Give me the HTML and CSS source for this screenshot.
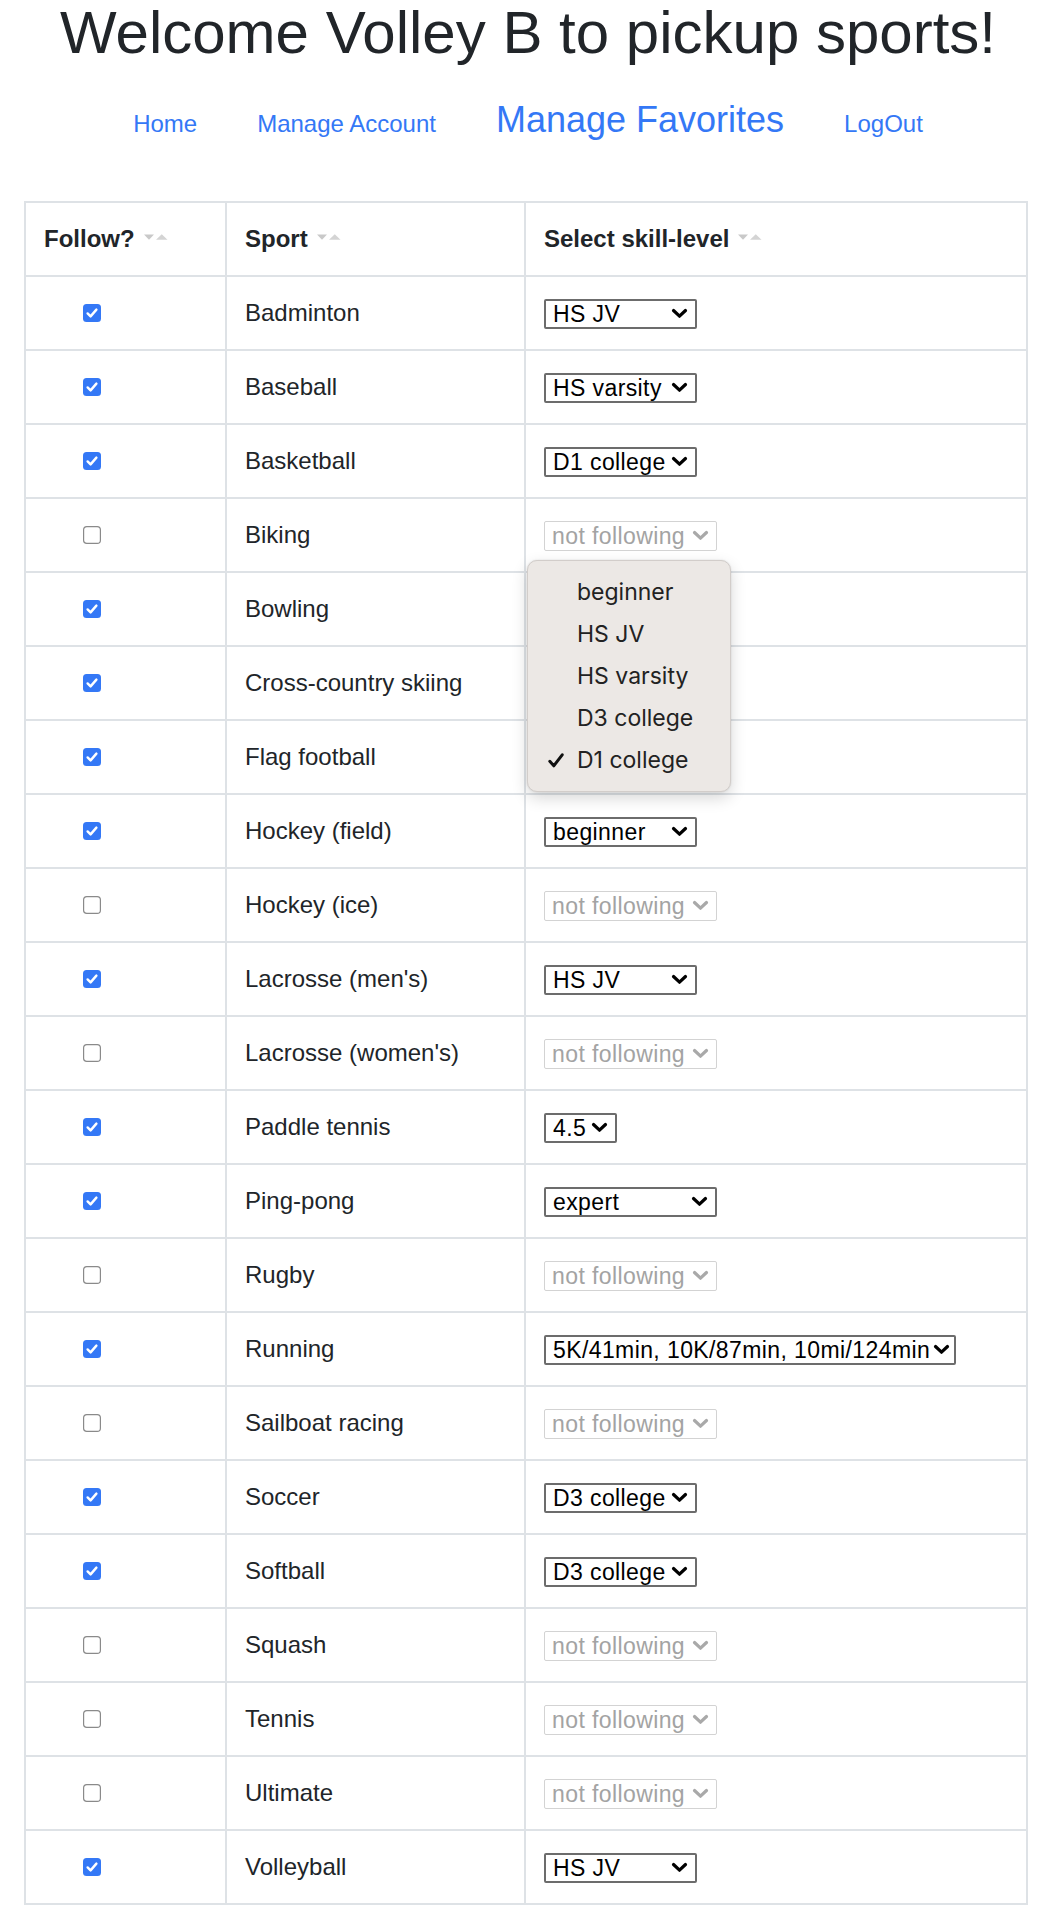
FILE: index.html
```html
<!DOCTYPE html>
<html lang="en">
<head>
<meta charset="utf-8">
<title>Manage Favorites</title>
<link rel="stylesheet" href="styles.css">
</head>
<body>
<div class="page">
  <h1 class="title">Welcome Volley B to pickup sports!</h1>
  <nav class="nav">
    <a class="nav-link" href="#">Home</a>
    <a class="nav-link" href="#">Manage Account</a>
    <a class="nav-link active" href="#">Manage Favorites</a>
    <a class="nav-link" href="#">LogOut</a>
  </nav>

  <div class="table-wrap">
    <table class="fav">
      <colgroup><col class="col-follow"><col class="col-sport"><col class="col-level"></colgroup>
      <thead>
        <tr>
          <th>Follow?<svg class="sort" viewBox="0 0 24 6" width="24" height="6"><path d="M0 0.5H10L5 5.8Z" fill="#c9c9c9"/><path d="M12 5.8H23.5L17.75 0.3Z" fill="#d4d4d4"/></svg></th>
          <th>Sport<svg class="sort" viewBox="0 0 24 6" width="24" height="6"><path d="M0 0.5H10L5 5.8Z" fill="#c9c9c9"/><path d="M12 5.8H23.5L17.75 0.3Z" fill="#d4d4d4"/></svg></th>
          <th>Select skill-level<svg class="sort" viewBox="0 0 24 6" width="24" height="6"><path d="M0 0.5H10L5 5.8Z" fill="#c9c9c9"/><path d="M12 5.8H23.5L17.75 0.3Z" fill="#d4d4d4"/></svg></th>
        </tr>
      </thead>
      <tbody>
        <tr><td><svg class="cb" viewBox="0 0 18 18"><rect x="0" y="0" width="18" height="18" rx="3.5" fill="#3478f6"/><path d="M4.6 9.4L7.6 12.4L13.4 5.6" fill="none" stroke="#fff" stroke-width="2.4" stroke-linecap="round" stroke-linejoin="round"/></svg></td><td>Badminton</td><td><span class="sel w152"><span class="sel-text">HS JV</span><svg class="chev" viewBox="0 0 17 11"><path d="M2.5 2.5L8.5 8.2L14.5 2.5" fill="none" stroke="#000" stroke-width="3.2" stroke-linecap="round" stroke-linejoin="round"/></svg></span></td></tr>
        <tr><td><svg class="cb" viewBox="0 0 18 18"><rect x="0" y="0" width="18" height="18" rx="3.5" fill="#3478f6"/><path d="M4.6 9.4L7.6 12.4L13.4 5.6" fill="none" stroke="#fff" stroke-width="2.4" stroke-linecap="round" stroke-linejoin="round"/></svg></td><td>Baseball</td><td><span class="sel w152"><span class="sel-text">HS varsity</span><svg class="chev" viewBox="0 0 17 11"><path d="M2.5 2.5L8.5 8.2L14.5 2.5" fill="none" stroke="#000" stroke-width="3.2" stroke-linecap="round" stroke-linejoin="round"/></svg></span></td></tr>
        <tr><td><svg class="cb" viewBox="0 0 18 18"><rect x="0" y="0" width="18" height="18" rx="3.5" fill="#3478f6"/><path d="M4.6 9.4L7.6 12.4L13.4 5.6" fill="none" stroke="#fff" stroke-width="2.4" stroke-linecap="round" stroke-linejoin="round"/></svg></td><td>Basketball</td><td><span class="sel w152"><span class="sel-text">D1 college</span><svg class="chev" viewBox="0 0 17 11"><path d="M2.5 2.5L8.5 8.2L14.5 2.5" fill="none" stroke="#000" stroke-width="3.2" stroke-linecap="round" stroke-linejoin="round"/></svg></span></td></tr>
        <tr><td><svg class="cb" viewBox="0 0 18 18"><rect x="0.6" y="0.6" width="16.8" height="16.8" rx="3.2" fill="#fff" stroke="#8a8a8a" stroke-width="1.2"/></svg></td><td>Biking</td><td><span class="sel dis w173"><span class="sel-text">not following</span><svg class="chev" viewBox="0 0 17 11"><path d="M2.5 2.5L8.5 8.2L14.5 2.5" fill="none" stroke="#a9a9a9" stroke-width="3.2" stroke-linecap="round" stroke-linejoin="round"/></svg></span></td></tr>
        <tr><td><svg class="cb" viewBox="0 0 18 18"><rect x="0" y="0" width="18" height="18" rx="3.5" fill="#3478f6"/><path d="M4.6 9.4L7.6 12.4L13.4 5.6" fill="none" stroke="#fff" stroke-width="2.4" stroke-linecap="round" stroke-linejoin="round"/></svg></td><td>Bowling</td><td></td></tr>
        <tr><td><svg class="cb" viewBox="0 0 18 18"><rect x="0" y="0" width="18" height="18" rx="3.5" fill="#3478f6"/><path d="M4.6 9.4L7.6 12.4L13.4 5.6" fill="none" stroke="#fff" stroke-width="2.4" stroke-linecap="round" stroke-linejoin="round"/></svg></td><td>Cross-country skiing</td><td></td></tr>
        <tr><td><svg class="cb" viewBox="0 0 18 18"><rect x="0" y="0" width="18" height="18" rx="3.5" fill="#3478f6"/><path d="M4.6 9.4L7.6 12.4L13.4 5.6" fill="none" stroke="#fff" stroke-width="2.4" stroke-linecap="round" stroke-linejoin="round"/></svg></td><td>Flag football</td><td></td></tr>
        <tr><td><svg class="cb" viewBox="0 0 18 18"><rect x="0" y="0" width="18" height="18" rx="3.5" fill="#3478f6"/><path d="M4.6 9.4L7.6 12.4L13.4 5.6" fill="none" stroke="#fff" stroke-width="2.4" stroke-linecap="round" stroke-linejoin="round"/></svg></td><td>Hockey (field)</td><td><span class="sel w152"><span class="sel-text">beginner</span><svg class="chev" viewBox="0 0 17 11"><path d="M2.5 2.5L8.5 8.2L14.5 2.5" fill="none" stroke="#000" stroke-width="3.2" stroke-linecap="round" stroke-linejoin="round"/></svg></span></td></tr>
        <tr><td><svg class="cb" viewBox="0 0 18 18"><rect x="0.6" y="0.6" width="16.8" height="16.8" rx="3.2" fill="#fff" stroke="#8a8a8a" stroke-width="1.2"/></svg></td><td>Hockey (ice)</td><td><span class="sel dis w173"><span class="sel-text">not following</span><svg class="chev" viewBox="0 0 17 11"><path d="M2.5 2.5L8.5 8.2L14.5 2.5" fill="none" stroke="#a9a9a9" stroke-width="3.2" stroke-linecap="round" stroke-linejoin="round"/></svg></span></td></tr>
        <tr><td><svg class="cb" viewBox="0 0 18 18"><rect x="0" y="0" width="18" height="18" rx="3.5" fill="#3478f6"/><path d="M4.6 9.4L7.6 12.4L13.4 5.6" fill="none" stroke="#fff" stroke-width="2.4" stroke-linecap="round" stroke-linejoin="round"/></svg></td><td>Lacrosse (men's)</td><td><span class="sel w152"><span class="sel-text">HS JV</span><svg class="chev" viewBox="0 0 17 11"><path d="M2.5 2.5L8.5 8.2L14.5 2.5" fill="none" stroke="#000" stroke-width="3.2" stroke-linecap="round" stroke-linejoin="round"/></svg></span></td></tr>
        <tr><td><svg class="cb" viewBox="0 0 18 18"><rect x="0.6" y="0.6" width="16.8" height="16.8" rx="3.2" fill="#fff" stroke="#8a8a8a" stroke-width="1.2"/></svg></td><td>Lacrosse (women's)</td><td><span class="sel dis w173"><span class="sel-text">not following</span><svg class="chev" viewBox="0 0 17 11"><path d="M2.5 2.5L8.5 8.2L14.5 2.5" fill="none" stroke="#a9a9a9" stroke-width="3.2" stroke-linecap="round" stroke-linejoin="round"/></svg></span></td></tr>
        <tr><td><svg class="cb" viewBox="0 0 18 18"><rect x="0" y="0" width="18" height="18" rx="3.5" fill="#3478f6"/><path d="M4.6 9.4L7.6 12.4L13.4 5.6" fill="none" stroke="#fff" stroke-width="2.4" stroke-linecap="round" stroke-linejoin="round"/></svg></td><td>Paddle tennis</td><td><span class="sel w73"><span class="sel-text">4.5</span><svg class="chev" viewBox="0 0 17 11"><path d="M2.5 2.5L8.5 8.2L14.5 2.5" fill="none" stroke="#000" stroke-width="3.2" stroke-linecap="round" stroke-linejoin="round"/></svg></span></td></tr>
        <tr><td><svg class="cb" viewBox="0 0 18 18"><rect x="0" y="0" width="18" height="18" rx="3.5" fill="#3478f6"/><path d="M4.6 9.4L7.6 12.4L13.4 5.6" fill="none" stroke="#fff" stroke-width="2.4" stroke-linecap="round" stroke-linejoin="round"/></svg></td><td>Ping-pong</td><td><span class="sel w173"><span class="sel-text">expert</span><svg class="chev" viewBox="0 0 17 11"><path d="M2.5 2.5L8.5 8.2L14.5 2.5" fill="none" stroke="#000" stroke-width="3.2" stroke-linecap="round" stroke-linejoin="round"/></svg></span></td></tr>
        <tr><td><svg class="cb" viewBox="0 0 18 18"><rect x="0.6" y="0.6" width="16.8" height="16.8" rx="3.2" fill="#fff" stroke="#8a8a8a" stroke-width="1.2"/></svg></td><td>Rugby</td><td><span class="sel dis w173"><span class="sel-text">not following</span><svg class="chev" viewBox="0 0 17 11"><path d="M2.5 2.5L8.5 8.2L14.5 2.5" fill="none" stroke="#a9a9a9" stroke-width="3.2" stroke-linecap="round" stroke-linejoin="round"/></svg></span></td></tr>
        <tr><td><svg class="cb" viewBox="0 0 18 18"><rect x="0" y="0" width="18" height="18" rx="3.5" fill="#3478f6"/><path d="M4.6 9.4L7.6 12.4L13.4 5.6" fill="none" stroke="#fff" stroke-width="2.4" stroke-linecap="round" stroke-linejoin="round"/></svg></td><td>Running</td><td><span class="sel w412"><span class="sel-text">5K/41min, 10K/87min, 10mi/124min</span><svg class="chev" viewBox="0 0 17 11"><path d="M2.5 2.5L8.5 8.2L14.5 2.5" fill="none" stroke="#000" stroke-width="3.2" stroke-linecap="round" stroke-linejoin="round"/></svg></span></td></tr>
        <tr><td><svg class="cb" viewBox="0 0 18 18"><rect x="0.6" y="0.6" width="16.8" height="16.8" rx="3.2" fill="#fff" stroke="#8a8a8a" stroke-width="1.2"/></svg></td><td>Sailboat racing</td><td><span class="sel dis w173"><span class="sel-text">not following</span><svg class="chev" viewBox="0 0 17 11"><path d="M2.5 2.5L8.5 8.2L14.5 2.5" fill="none" stroke="#a9a9a9" stroke-width="3.2" stroke-linecap="round" stroke-linejoin="round"/></svg></span></td></tr>
        <tr><td><svg class="cb" viewBox="0 0 18 18"><rect x="0" y="0" width="18" height="18" rx="3.5" fill="#3478f6"/><path d="M4.6 9.4L7.6 12.4L13.4 5.6" fill="none" stroke="#fff" stroke-width="2.4" stroke-linecap="round" stroke-linejoin="round"/></svg></td><td>Soccer</td><td><span class="sel w152"><span class="sel-text">D3 college</span><svg class="chev" viewBox="0 0 17 11"><path d="M2.5 2.5L8.5 8.2L14.5 2.5" fill="none" stroke="#000" stroke-width="3.2" stroke-linecap="round" stroke-linejoin="round"/></svg></span></td></tr>
        <tr><td><svg class="cb" viewBox="0 0 18 18"><rect x="0" y="0" width="18" height="18" rx="3.5" fill="#3478f6"/><path d="M4.6 9.4L7.6 12.4L13.4 5.6" fill="none" stroke="#fff" stroke-width="2.4" stroke-linecap="round" stroke-linejoin="round"/></svg></td><td>Softball</td><td><span class="sel w152"><span class="sel-text">D3 college</span><svg class="chev" viewBox="0 0 17 11"><path d="M2.5 2.5L8.5 8.2L14.5 2.5" fill="none" stroke="#000" stroke-width="3.2" stroke-linecap="round" stroke-linejoin="round"/></svg></span></td></tr>
        <tr><td><svg class="cb" viewBox="0 0 18 18"><rect x="0.6" y="0.6" width="16.8" height="16.8" rx="3.2" fill="#fff" stroke="#8a8a8a" stroke-width="1.2"/></svg></td><td>Squash</td><td><span class="sel dis w173"><span class="sel-text">not following</span><svg class="chev" viewBox="0 0 17 11"><path d="M2.5 2.5L8.5 8.2L14.5 2.5" fill="none" stroke="#a9a9a9" stroke-width="3.2" stroke-linecap="round" stroke-linejoin="round"/></svg></span></td></tr>
        <tr><td><svg class="cb" viewBox="0 0 18 18"><rect x="0.6" y="0.6" width="16.8" height="16.8" rx="3.2" fill="#fff" stroke="#8a8a8a" stroke-width="1.2"/></svg></td><td>Tennis</td><td><span class="sel dis w173"><span class="sel-text">not following</span><svg class="chev" viewBox="0 0 17 11"><path d="M2.5 2.5L8.5 8.2L14.5 2.5" fill="none" stroke="#a9a9a9" stroke-width="3.2" stroke-linecap="round" stroke-linejoin="round"/></svg></span></td></tr>
        <tr><td><svg class="cb" viewBox="0 0 18 18"><rect x="0.6" y="0.6" width="16.8" height="16.8" rx="3.2" fill="#fff" stroke="#8a8a8a" stroke-width="1.2"/></svg></td><td>Ultimate</td><td><span class="sel dis w173"><span class="sel-text">not following</span><svg class="chev" viewBox="0 0 17 11"><path d="M2.5 2.5L8.5 8.2L14.5 2.5" fill="none" stroke="#a9a9a9" stroke-width="3.2" stroke-linecap="round" stroke-linejoin="round"/></svg></span></td></tr>
        <tr><td><svg class="cb" viewBox="0 0 18 18"><rect x="0" y="0" width="18" height="18" rx="3.5" fill="#3478f6"/><path d="M4.6 9.4L7.6 12.4L13.4 5.6" fill="none" stroke="#fff" stroke-width="2.4" stroke-linecap="round" stroke-linejoin="round"/></svg></td><td>Volleyball</td><td><span class="sel w152"><span class="sel-text">HS JV</span><svg class="chev" viewBox="0 0 17 11"><path d="M2.5 2.5L8.5 8.2L14.5 2.5" fill="none" stroke="#000" stroke-width="3.2" stroke-linecap="round" stroke-linejoin="round"/></svg></span></td></tr>
      </tbody>
    </table>

    <div class="popup">
      <div class="opt">beginner</div>
      <div class="opt">HS JV</div>
      <div class="opt">HS varsity</div>
      <div class="opt">D3 college</div>
      <div class="opt checked"><svg class="tick" viewBox="0 0 16 15"><path d="M1.8 8.3L5.8 12.8L14.2 1.8" fill="none" stroke="#111" stroke-width="3" stroke-linecap="round" stroke-linejoin="round"/></svg>D1 college</div>
    </div>
  </div>
</div>
</body>
</html>
```

FILE: styles.css
```css
html, body {
  margin: 0;
  padding: 0;
  background: #fff;
}

body {
  font-family: "Liberation Sans", Helvetica, Arial, sans-serif;
  font-size: 24px;
  line-height: 1.5;
  color: #212529;
}

.page {
  width: 1056px;
}

.title {
  margin: 3px 0 0;
  font-size: 60px;
  font-weight: 400;
  line-height: 60px;
  text-align: center;
  color: #212529;
}

.nav {
  display: flex;
  justify-content: center;
  align-items: baseline;
  gap: 60px;
  margin-top: 30px;
}

.nav-link {
  font-size: 24px;
  line-height: 36px;
  color: #3478f6;
  text-decoration: none;
}

.nav-link.active {
  font-size: 36px;
  line-height: 54px;
}

.table-wrap {
  position: relative;
  margin: 54px 0 0 24px;
  width: 1004px;
}

.fav {
  width: 1004px;
  table-layout: fixed;
  border-collapse: collapse;
}

.col-follow { width: 201px; }
.col-sport { width: 299px; }

.fav th,
.fav td {
  border: 2px solid #dee2e6;
  padding: 18px;
  height: 36px;
  text-align: left;
  vertical-align: middle;
  white-space: nowrap;
}

.fav th {
  font-weight: 700;
}

.sort {
  display: inline-block;
  width: 24px;
  height: 6px;
  margin-left: 9px;
  vertical-align: 7px;
}

.cb {
  display: inline-block;
  width: 18px;
  height: 18px;
  margin-left: 39px;
  vertical-align: middle;
  position: relative;
  top: -2px;
}

.sel {
  display: inline-flex;
  align-items: center;
  box-sizing: border-box;
  height: 30px;
  padding: 0 7px;
  border: 2px solid #6c6c6c;
  border-radius: 2px;
  background: #fff;
  color: #000;
  vertical-align: middle;
  position: relative;
  top: -1px;
  overflow: hidden;
}

.sel-text {
  font-size: 23px;
  letter-spacing: 0.4px;
  line-height: 26px;
  white-space: nowrap;
}

.chev {
  flex: none;
  width: 17px;
  height: 11px;
  margin-left: auto;
  padding-left: 3px;
}

.sel.dis {
  border: 1.5px solid #d3d3d3;
  color: #a3a3a3;
}

.w152 { width: 153px; }
.w173 { width: 173px; }
.w73 { width: 73px; }
.w412 { width: 412px; }

.popup {
  position: absolute;
  left: 503px;
  top: 359px;
  width: 204px;
  box-sizing: border-box;
  padding: 10px 0;
  background: #ece8e5;
  border: 1px solid #d2cdca;
  border-radius: 10px;
  box-shadow: 0 6px 16px rgba(0, 0, 0, 0.16), 0 0 2px rgba(0, 0, 0, 0.12);
}

.opt {
  position: relative;
  height: 42px;
  line-height: 42px;
  padding-left: 49px;
  font-family: Inter, "Liberation Sans", sans-serif;
  font-size: 23px;
  color: #222;
}

.tick {
  position: absolute;
  left: 20px;
  top: 14px;
  width: 16px;
  height: 15px;
}
```
